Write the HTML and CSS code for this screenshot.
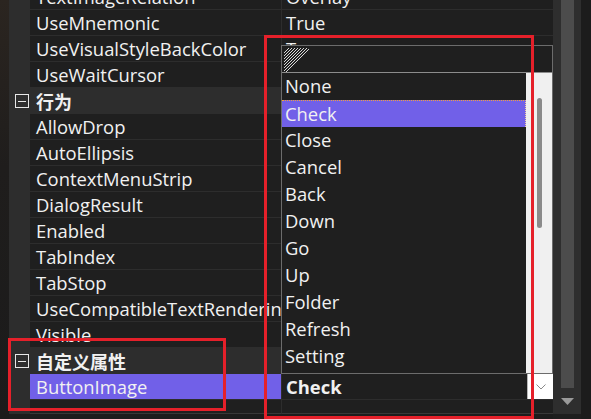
FILE: index.html
```html
<!DOCTYPE html>
<html lang="zh">
<head>
<meta charset="utf-8">
<title>PropertyGrid</title>
<link rel="stylesheet" href="styles.css">
</head>
<body>
<div class="window">
  <div class="edge"></div>
  <div class="grid">
    <div class="rows">
      <div class="row"><div class="gutter"></div><div class="name">TextImageRelation</div><div class="value">Overlay</div></div>
      <div class="row"><div class="gutter"></div><div class="name">UseMnemonic</div><div class="value">True</div></div>
      <div class="row"><div class="gutter"></div><div class="name">UseVisualStyleBackColor</div><div class="value">True</div></div>
      <div class="row"><div class="gutter"></div><div class="name">UseWaitCursor</div><div class="value"></div></div>
      <div class="row cat"><div class="gutter"><span class="minus"></span></div><div class="name">行为</div><div class="value"></div></div>
      <div class="row"><div class="gutter"></div><div class="name">AllowDrop</div><div class="value"></div></div>
      <div class="row"><div class="gutter"></div><div class="name">AutoEllipsis</div><div class="value"></div></div>
      <div class="row"><div class="gutter"></div><div class="name">ContextMenuStrip</div><div class="value"></div></div>
      <div class="row"><div class="gutter"></div><div class="name">DialogResult</div><div class="value"></div></div>
      <div class="row"><div class="gutter"></div><div class="name">Enabled</div><div class="value"></div></div>
      <div class="row"><div class="gutter"></div><div class="name">TabIndex</div><div class="value"></div></div>
      <div class="row"><div class="gutter"></div><div class="name">TabStop</div><div class="value"></div></div>
      <div class="row"><div class="gutter"></div><div class="name">UseCompatibleTextRendering</div><div class="value"></div></div>
      <div class="row"><div class="gutter"></div><div class="name">Visible</div><div class="value"></div></div>
      <div class="row cat"><div class="gutter"><span class="minus"></span></div><div class="name">自定义属性</div><div class="value"></div></div>
      <div class="row sel"><div class="gutter"></div><div class="name">ButtonImage</div><div class="value picked"><span class="picked-text">Check</span><span class="dd"><svg width="10" height="6" viewBox="0 0 10 6"><polyline points="0.5,0.5 5,5 9.5,0.5" fill="none" stroke="#8a8a8a" stroke-width="1"/></svg></span></div></div>
      <div class="row filler"><div class="gutter"></div><div class="name"></div><div class="value"></div></div>
    </div>
    <div class="bottom"></div>
  </div>
  <div class="vscroll">
    <div class="thumb"></div>
    <div class="arrow"><svg width="13" height="7" viewBox="0 0 13 7"><polygon points="0,0 13,0 6.5,7" fill="#9a9a9a"/></svg></div>
  </div>
  <div class="rim"></div>
</div>

<div class="popup">
  <div class="popup-head">
    <svg class="hatch" width="25" height="24" viewBox="0 0 25 24">
      <g stroke="#d8d8d8" stroke-width="1">
        <line x1="5" y1="0" x2="0" y2="5"/>
        <line x1="8" y1="0" x2="0" y2="8"/>
        <line x1="11" y1="0" x2="0" y2="11"/>
        <line x1="14" y1="0" x2="0" y2="14"/>
        <line x1="17" y1="0" x2="0" y2="17"/>
        <line x1="20" y1="0" x2="0" y2="20"/>
        <line x1="23" y1="0" x2="0" y2="23"/>
        <line x1="25" y1="1" x2="2" y2="24"/>
      </g>
    </svg>
  </div>
  <div class="popup-body">
    <div class="list">
      <div class="item">None</div>
      <div class="item on">Check</div>
      <div class="item">Close</div>
      <div class="item">Cancel</div>
      <div class="item">Back</div>
      <div class="item">Down</div>
      <div class="item">Go</div>
      <div class="item">Up</div>
      <div class="item">Folder</div>
      <div class="item">Refresh</div>
      <div class="item">Setting</div>
    </div>
    <div class="pscroll"><div class="pthumb"></div></div>
  </div>
</div>

<div class="mark mark-big"></div>
<div class="mark mark-small"></div>
</body>
</html>
```

FILE: styles.css
```css
* { box-sizing: border-box; margin: 0; padding: 0; }

html, body {
  width: 591px;
  height: 419px;
  overflow: hidden;
  background: #1e1e1e;
}

body {
  position: relative;
  font-family: "Open Sans", "Noto Sans CJK SC", sans-serif;
  font-size: 18.4px;
  color: #f1f1f1;
}

.window {
  display: flex;
  height: 419px;
}

.edge {
  width: 9px;
  background: linear-gradient(#2b2520, #1f1d1c 40%, #1b1b1b);
}

.grid {
  width: 544px;
  display: flex;
  flex-direction: column;
  overflow: hidden;
}

.rows {
  margin-top: -16px;
}

.row {
  display: grid;
  grid-template-columns: 21px 252px 271px;
  height: 26px;
}

.gutter {
  background: #2d2d2d;
  display: flex;
  align-items: center;
  padding-left: 6px;
}

.name,
.value {
  background: #1f1f1f;
  border-bottom: 1px solid #2d2d2d;
  display: flex;
  align-items: center;
  white-space: nowrap;
  overflow: hidden;
}

.name {
  padding-left: 6px;
  border-right: 1px solid #2d2d2d;
}

.value {
  padding-left: 4px;
}

.cat .name,
.cat .value {
  background: #2d2d2d;
  font-weight: bold;
  font-size: 18px;
}

.minus {
  width: 14px;
  height: 14px;
  border: 1px solid #e6e6e6;
  display: flex;
  align-items: center;
  justify-content: center;
}

.minus::after {
  content: "";
  width: 8px;
  height: 1px;
  background: #e6e6e6;
}

.sel .name {
  background: #7160e8;
}

.picked {
  justify-content: space-between;
  padding-right: 0;
}

.picked-text {
  font-weight: bold;
}

.dd {
  width: 26px;
  height: 25px;
  background: #ffffff;
  border-left: 1px solid #b8b8b8;
  display: flex;
  align-items: center;
  justify-content: center;
}

.filler {
  height: 14px;
}

.filler .name,
.filler .value {
  border-bottom: 1px solid #383838;
}

.bottom {
  flex: 1;
  background: #1c1c1c;
}

.vscroll {
  width: 28px;
  height: 414px;
  background: #2e2e2e;
  display: flex;
  flex-direction: column;
  align-items: center;
}

.thumb {
  width: 13px;
  height: 388px;
  background: #4c4c4c;
}

.arrow {
  margin-top: 10px;
  height: 7px;
  display: flex;
}

.rim {
  flex: 1;
  background: #1c1c1c;
}

/* dropdown popup (overlay) */
.popup {
  position: absolute;
  left: 281px;
  top: 45px;
  width: 272px;
  height: 329px;
  border: 1px solid #6c6c6c;
  background: #1f1f1f;
  display: flex;
  flex-direction: column;
}

.popup-head {
  height: 27px;
  border-bottom: 1px solid #8c8c8c;
  padding: 2px 0 0 2px;
}

.hatch {
  display: block;
}

.popup-body {
  flex: 1;
  display: flex;
}

.list {
  width: 244px;
}

.item {
  height: 27px;
  display: flex;
  align-items: center;
  padding: 0 0 2px 3px;
}

.item.on {
  background: #7160e8;
  border-top: 1px dotted #f0a040;
  border-right: 1px dotted #f3d0a0;
}

.pscroll {
  flex: 1;
  background: #f0f0f0;
  padding: 25px 0 0 11px;
}

.pthumb {
  width: 5px;
  height: 130px;
  background: #8a8a8a;
  border-radius: 3px;
}

/* red annotation boxes */
.mark {
  position: absolute;
  border: 3px solid #e5202a;
}

.mark-big {
  left: 264px;
  top: 35px;
  width: 270px;
  height: 384px;
}

.mark-small {
  left: 8px;
  top: 338px;
  width: 218px;
  height: 73px;
}
```
